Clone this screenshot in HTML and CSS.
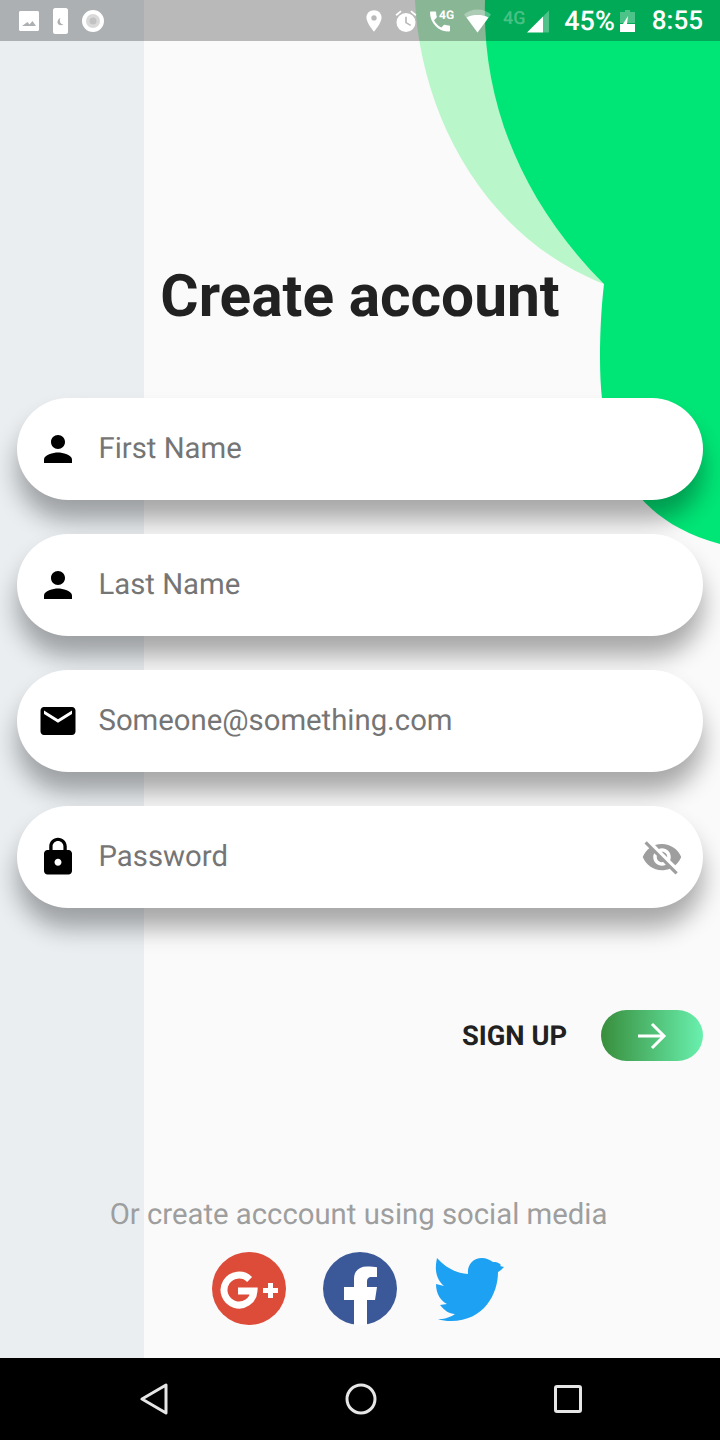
FILE: index.html
```html
<!DOCTYPE html>
<html lang="en">
<head>
  <meta charset="UTF-8">
  <meta name="viewport" content="width=device-width, initial-scale=1">
  <title>Create account</title>
  <link rel="stylesheet" href="styles.css">
</head>
<body>
  <div id="screen">
    <!-- green blobs in the top right corner -->
    <svg class="blob" width="720" height="560" viewBox="0 0 720 560">
      <path fill="#b9f6ca" d="M415 0C420 110 480 235 604 284L720 300V0Z"/>
      <path fill="#00e676" d="M485 0C482 100 520 200 604 284C601 310 600 335 600 358C600 440 620 517 720 544V0Z"/>
    </svg>

    <div id="statusbar">
      <div class="status-group">
        <svg class="st-icon" width="20" height="20" viewBox="0 0 20 20"><path fill="#fff" fill-rule="evenodd" d="M1.500 0h17c.8 0 1.500.7 1.500 1.500v17c0 .8-.7 1.500-1.500 1.500h-17C.7 20 0 19.300 0 18.500v-17C0 .7.7 0 1.500 0zM3 15h14l-3.500-5-3 3.500-2-2.500z"/></svg>
        <svg class="st-icon" width="15" height="26" viewBox="0 0 15 26"><path fill="#fff" fill-rule="evenodd" d="M2 0h11c1 0 2 1 2 2v22c0 1-1 2-2 2H2c-1 0-2-1-2-2V2C0 1 1 0 2 0zm5.500 10c-1.500 3-.5 6 3 6.500-2 1.500-6 .8-6-2.500 0-1.800 1.500-3.500 3-4z"/></svg>
        <svg class="st-icon" width="22" height="22" viewBox="0 0 22 22"><circle cx="11" cy="11" r="9" fill="#d9d9d9" stroke="#fff" stroke-width="4"/><circle cx="11" cy="11" r="3.500" fill="#c2c2c2"/></svg>
      </div>
      <div class="status-group status-right">
        <svg class="st-icon" width="16" height="22" viewBox="0 0 18 24"><path fill="#fff" fill-rule="evenodd" d="M9 0c5 0 8.500 3.600 8.500 8.300C17.500 14 9 24 9 24S.5 14 .5 8.300C.5 3.600 4 0 9 0zm0 5.500a3 3 0 1 0 0 6 3 3 0 0 0 0-6z"/></svg>
        <svg class="st-icon alarm" width="22" height="22" viewBox="0 0 26 26"><path fill="#fff" fill-rule="evenodd" d="M13 3.500a11.250 11.250 0 1 1 0 22.500 11.250 11.250 0 0 1 0-22.500zM12 8v7.500l6 3.500 1-1.600-5-3V8zM6.500 .5l1.300 1.600L2 7 .6 5.400zM19.500 .5L25.400 5.400 24 7 18.200 2.100z"/></svg>
        <svg class="st-icon call" width="24" height="30" viewBox="0 0 24 30"><g transform="translate(-3.300 2.200) scale(1.110)"><path fill="#fff" d="M6.620 10.790c1.440 2.830 3.760 5.140 6.590 6.590l2.200-2.200c.27-.27.67-.36 1.020-.24 1.120.37 2.330.57 3.570.57.55 0 1 .45 1 1V20c0 .55-.45 1-1 1-9.390 0-17-7.610-17-17 0-.55.45-1 1-1h3.500c.55 0 1 .45 1 1 0 1.250.2 2.450.57 3.570.11.35.03.74-.25 1.020l-2.200 2.200z"/></g><text x="9" y="12.500" class="tiny">4G</text></svg>
        <svg class="st-icon wifi" width="27" height="24" viewBox="0 0 27 24"><path fill="#fff" fill-opacity=".3" d="M13.500 .5C8 .5 3 2.500 0 5.500l13.500 18 13.500-18C24 2.500 19 .5 13.500 .5z"/><path fill="#fff" d="M13.500 23.500L2.500 8.500C6 6.500 10 6 13.500 6s7.500.5 11 2.500z"/></svg>
        <svg class="st-icon signal" width="47" height="30" viewBox="0 0 47 30"><text x="0" y="17.500" class="tiny dim">4G</text><path fill="#fff" d="M24 26.500l16-16v16z"/><path fill="#fff" fill-opacity=".3" d="M40 10.500l6-6v22h-6z"/></svg>
        <span class="st-text st-level">45%</span>
        <svg class="st-icon battery" width="15" height="22" viewBox="0 0 15 22"><path fill="#fff" fill-opacity=".3" d="M5 0h5v2h5v11H0V2h5z"/><path fill="#fff" d="M0 14h3l5-8-1 8h8v8H0z"/></svg>
        <span class="st-text st-time">8:55</span>
      </div>
    </div>

    <div id="main">
      <h1 class="title">Create account</h1>

      <div class="fields">
        <div class="field">
          <svg class="field-icon" width="42" height="42" viewBox="0 0 24 24"><path d="M12 12c2.210 0 4-1.790 4-4s-1.790-4-4-4-4 1.790-4 4 1.790 4 4 4zm0 2c-2.670 0-8 1.340-8 4v2h16v-2c0-2.660-5.330-4-8-4z"/></svg>
          <span class="hint">First Name</span>
        </div>
        <div class="field">
          <svg class="field-icon" width="42" height="42" viewBox="0 0 24 24"><path d="M12 12c2.210 0 4-1.790 4-4s-1.790-4-4-4-4 1.790-4 4 1.790 4 4 4zm0 2c-2.670 0-8 1.340-8 4v2h16v-2c0-2.660-5.330-4-8-4z"/></svg>
          <span class="hint">Last Name</span>
        </div>
        <div class="field">
          <svg class="field-icon" width="42" height="42" viewBox="0 0 24 24"><path d="M20 4H4c-1.100 0-1.990.9-1.990 2L2 18c0 1.100.9 2 2 2h16c1.100 0 2-.9 2-2V6c0-1.100-.9-2-2-2zm0 4l-8 5-8-5V6l8 5 8-5v2z"/></svg>
          <span class="hint">Someone@something.com</span>
        </div>
        <div class="field">
          <svg class="field-icon" width="42" height="42" viewBox="0 0 24 24"><path d="M18 8h-1V6c0-2.760-2.240-5-5-5S7 3.240 7 6v2H6c-1.100 0-2 .9-2 2v10c0 1.100.9 2 2 2h12c1.100 0 2-.9 2-2V10c0-1.100-.9-2-2-2zm-6 9c-1.100 0-2-.9-2-2s.9-2 2-2 2 .9 2 2-.9 2-2 2zm3.100-9H8.900V6c0-1.710 1.390-3.100 3.100-3.100 1.710 0 3.100 1.390 3.100 3.100v2z"/></svg>
          <span class="hint">Password</span>
          <svg class="eye" width="42" height="42" viewBox="0 0 24 24"><path fill="#9e9e9e" d="M12 7c2.760 0 5 2.240 5 5 0 .65-.13 1.260-.36 1.830l2.920 2.920c1.510-1.260 2.700-2.890 3.430-4.750-1.730-4.390-6-7.500-11-7.500-1.400 0-2.740.25-3.980.7l2.160 2.160C10.740 7.130 11.350 7 12 7zM2 4.270l2.280 2.280.46.46C3.080 8.300 1.780 10.020 1 12c1.730 4.390 6 7.500 11 7.500 1.550 0 3.030-.3 4.380-.84l.42.42L19.730 22 21 20.730 3.270 3 2 4.270zM7.530 9.800l1.550 1.550c-.05.21-.08.43-.08.65 0 1.660 1.340 3 3 3 .22 0 .44-.03.65-.08l1.550 1.550c-.67.33-1.410.53-2.200.53-2.760 0-5-2.240-5-5 0-.79.2-1.530.53-2.200zm4.310-.78l3.150 3.150.02-.16c0-1.660-1.340-3-3-3l-.17.01z"/></svg>
        </div>
      </div>

      <div class="signup">
        <span class="signup-label">SIGN UP</span>
        <div class="signup-btn">
          <svg width="30" height="28" viewBox="0 0 30 28"><path fill="none" stroke="#fff" stroke-width="3" d="M1 14h26M15 2l12 12-12 12"/></svg>
        </div>
      </div>

      <p class="social-text">Or create acccount using social media</p>
      <div class="social">
        <svg width="74" height="73" viewBox="0 0 74 73"><ellipse cx="37" cy="36.500" rx="37" ry="36.500" fill="#dd4b39"/><path fill="none" stroke="#fff" stroke-width="7" d="M37.600 27.400A15 15 0 1 0 42 39H26"/><path fill="#fff" d="M56 31h5v5h5v5h-5v5h-5v-5h-5v-5h5z"/></svg>
        <svg width="74" height="73" viewBox="0 0 74 73"><ellipse cx="37" cy="36.500" rx="37" ry="36.500" fill="#3b5998"/><path fill="#fff" d="M31 73V48H21V35h10v-8c0-8 5-12.500 13-12.500 4 0 8 .3 10 .8V25h-5c-4 0-5 2-5 5v5h10l-2 13H44v25z"/></svg>
        <svg width="74" height="64" viewBox="0 0 74 64"><path fill="#1da1f2" d="M3 1c8 9 18 15 31 16-1-9 5-16 14-16 4 0 8 2 11 4 3 0 6 .5 8 3l-1 1 4 1c-2 2-4 4-6 5 0 22-14 49-47 49-5 0-9-.5-13-2 6 .5 13-2 17-5-6 0-11-4-15-9l7-1C7 44 2 37 2 27l8 2C3 23 0 14 3 1z"/></svg>
      </div>
    </div>

    <div id="navbar">
      <svg width="28" height="32" viewBox="0 0 28 32"><path fill="none" stroke="#e6e6e6" stroke-width="3" stroke-linejoin="round" d="M2 16L26 2v28z"/></svg>
      <svg width="32" height="32" viewBox="0 0 32 32"><circle cx="16" cy="16" r="14" fill="none" stroke="#e6e6e6" stroke-width="3"/></svg>
      <svg width="28" height="28" viewBox="0 0 28 28"><rect x="1.500" y="1.500" width="25" height="25" rx="1.500" fill="none" stroke="#e6e6e6" stroke-width="3"/></svg>
    </div>
  </div>
</body>
</html>
```

FILE: styles.css
```css
html, body
{
  margin: 0;
  padding: 0;
}
body
{
  font-family: Roboto, "Liberation Sans", sans-serif;
  text-rendering: geometricPrecision;
}
#screen
{
  position: relative;
  display: flex;
  flex-direction: column;
  width: 720px;
  height: 1440px;
  overflow: hidden;
  background: linear-gradient(90deg, #eaeef1 144px, #fafafa 144px);
}
.blob
{
  position: absolute;
  top: 0;
  left: 0;
}
#statusbar
{
  position: relative;
  display: flex;
  justify-content: space-between;
  align-items: center;
  height: 41px;
  padding: 0 17px 0 19px;
  box-sizing: border-box;
  background-color: rgba(0, 0, 0, 0.26);
}
.status-group
{
  display: flex;
  align-items: center;
  gap: 14px;
}
.status-right
{
  gap: 0;
}
.st-text
{
  color: #fff;
  font-size: 27px;
  font-weight: 500;
}
.st-level
{
  margin-left: 14px;
}
.tiny
{
  fill: #fff;
  font-size: 12px;
  font-weight: 700;
}
.dim
{
  fill-opacity: 0.3;
  font-size: 18px;
  font-weight: 500;
}
.alarm
{
  margin-left: 13px;
}
.call
{
  margin-left: 13px;
}
.wifi
{
  margin-left: 10px;
}
.signal
{
  margin-left: 12px;
}
.battery
{
  margin-left: 5px;
}
.st-time
{
  margin-left: 17px;
  font-size: 26px;
}
#main
{
  position: relative;
  flex: 1;
  display: flex;
  flex-direction: column;
}
.title
{
  margin: 224px 0 0;
  height: 65px;
  line-height: 65px;
  text-align: center;
  color: #212121;
  font-size: 58.6px;
  font-weight: 700;
}
.fields
{
  display: flex;
  flex-direction: column;
  gap: 34px;
  margin: 68px 17px 0;
}
.field
{
  display: flex;
  align-items: center;
  height: 102px;
  padding: 0 20px;
  border-radius: 51px;
  background-color: #fff;
  box-shadow: 0 20px 25px rgba(0, 0, 0, 0.33);
}
.field-icon
{
  flex: none;
}
.hint
{
  flex: 1;
  margin-left: 19.5px;
  color: #757575;
  font-size: 29.3px;
}
.signup
{
  display: flex;
  justify-content: flex-end;
  align-items: center;
  gap: 34px;
  margin: 102px 17px 0;
}
.signup-label
{
  color: #212121;
  font-size: 27.3px;
  font-weight: 700;
}
.signup-btn
{
  display: flex;
  justify-content: center;
  align-items: center;
  width: 102px;
  height: 51px;
  border-radius: 26px;
  background: linear-gradient(90deg, #388e3c, #69f0ae);
}
.social-text
{
  margin: 137px 3px 0 0;
  text-align: center;
  color: #9e9e9e;
  font-size: 29.3px;
  line-height: 34px;
}
.social
{
  display: flex;
  justify-content: center;
  align-items: center;
  gap: 37px;
  margin-top: 20px;
}
#navbar
{
  display: flex;
  justify-content: space-between;
  align-items: center;
  height: 82px;
  padding: 0 138px 0 140px;
  background-color: #000;
}
```
